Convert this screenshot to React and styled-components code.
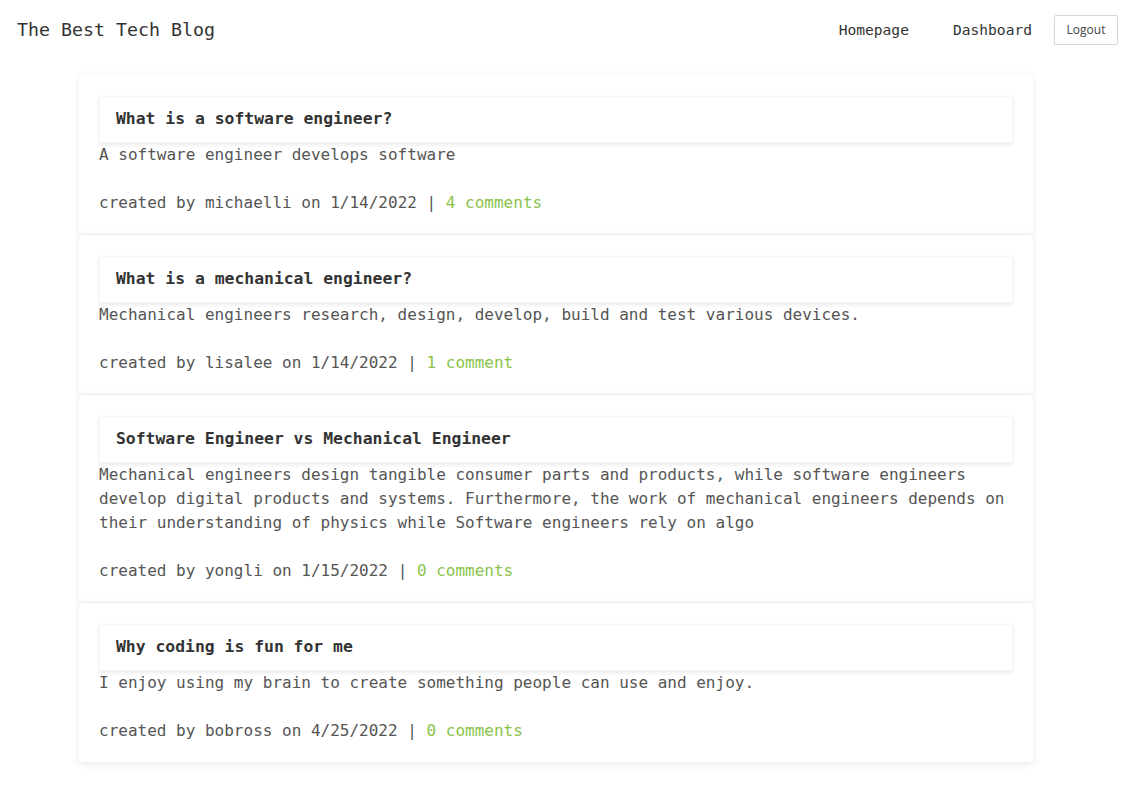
import React from 'react';
import styled, { createGlobalStyle } from 'styled-components';

const GlobalStyle = createGlobalStyle`
  body {
    margin: 0;
    background: #fff;
    font-family: "DejaVu Sans Mono", "Liberation Mono", monospace;
    color: #444;
  }
`;

const TopBar = styled.header`
  display: flex;
  align-items: center;
  justify-content: space-between;
  height: 59px;
  padding: 0 8px 0 17px;
`;

const SiteTitle = styled.h1`
  margin: 0;
  font-size: 18.3px;
  font-weight: normal;
  color: #333;
`;

const Nav = styled.nav`
  display: flex;
  align-items: center;
`;

const NavLink = styled.a`
  font-size: 14.6px;
  color: #333;
  text-decoration: none;
  margin-right: 44px;
  &:last-of-type {
    margin-right: 22px;
  }
`;

const LogoutBtn = styled.button`
  font-family: "Open Sans", "Noto Sans", sans-serif;
  font-size: 12px;
  color: #444;
  background: #fff;
  border: 1px solid #d6d6d6;
  border-radius: 2px;
  width: 64px;
  height: 30px;
  padding: 0;
`;

const Main = styled.main`
  padding: 16px 93px 30px 79px;
`;

const Card = styled.article`
  background: #fff;
  border-radius: 3px;
  box-shadow: 0 2px 8px rgba(0, 0, 0, 0.09);
  padding: 21px 20px 19px;
  margin-bottom: 1px;
`;

const CardHead = styled.div`
  padding: 10px 16px 11px;
  box-shadow: 0 2px 4px rgba(0, 0, 0, 0.08);
  border: 1px solid #f6f6f6;
`;

const PostTitle = styled.h2`
  margin: 0;
  font-size: 16.4px;
  line-height: 24px;
  font-weight: bold;
  color: #333;
`;

const Body = styled.p`
  margin: 0 0 24px;
  font-size: 16px;
  line-height: 24px;
  color: #555;
`;

const Meta = styled.p`
  margin: 0;
  font-size: 16px;
  line-height: 24px;
  color: #555;
`;

const Comments = styled.a`
  color: #8bc34a;
  text-decoration: none;
`;

const posts = [
  {
    title: 'What is a software engineer?',
    body: 'A software engineer develops software',
    user: 'michaelli',
    date: '1/14/2022',
    comments: '4 comments',
  },
  {
    title: 'What is a mechanical engineer?',
    body: 'Mechanical engineers research, design, develop, build and test various devices.',
    user: 'lisalee',
    date: '1/14/2022',
    comments: '1 comment',
  },
  {
    title: 'Software Engineer vs Mechanical Engineer',
    body: 'Mechanical engineers design tangible consumer parts and products, while software engineers develop digital products and systems. Furthermore, the work of mechanical engineers depends on their understanding of physics while Software engineers rely on algo',
    user: 'yongli',
    date: '1/15/2022',
    comments: '0 comments',
  },
  {
    title: 'Why coding is fun for me',
    body: 'I enjoy using my brain to create something people can use and enjoy.',
    user: 'bobross',
    date: '4/25/2022',
    comments: '0 comments',
  },
];

const App = () => (
  <>
    <GlobalStyle />
    <TopBar>
      <SiteTitle>The Best Tech Blog</SiteTitle>
      <Nav>
        <NavLink href="#">Homepage</NavLink>
        <NavLink href="#">Dashboard</NavLink>
        <LogoutBtn>Logout</LogoutBtn>
      </Nav>
    </TopBar>
    <Main>
      {posts.map((p) => (
        <Card key={p.title}>
          <CardHead>
            <PostTitle>{p.title}</PostTitle>
          </CardHead>
          <Body>{p.body}</Body>
          <Meta>
            created by {p.user} on {p.date} | <Comments href="#">{p.comments}</Comments>
          </Meta>
        </Card>
      ))}
    </Main>
  </>
);

export default App;
